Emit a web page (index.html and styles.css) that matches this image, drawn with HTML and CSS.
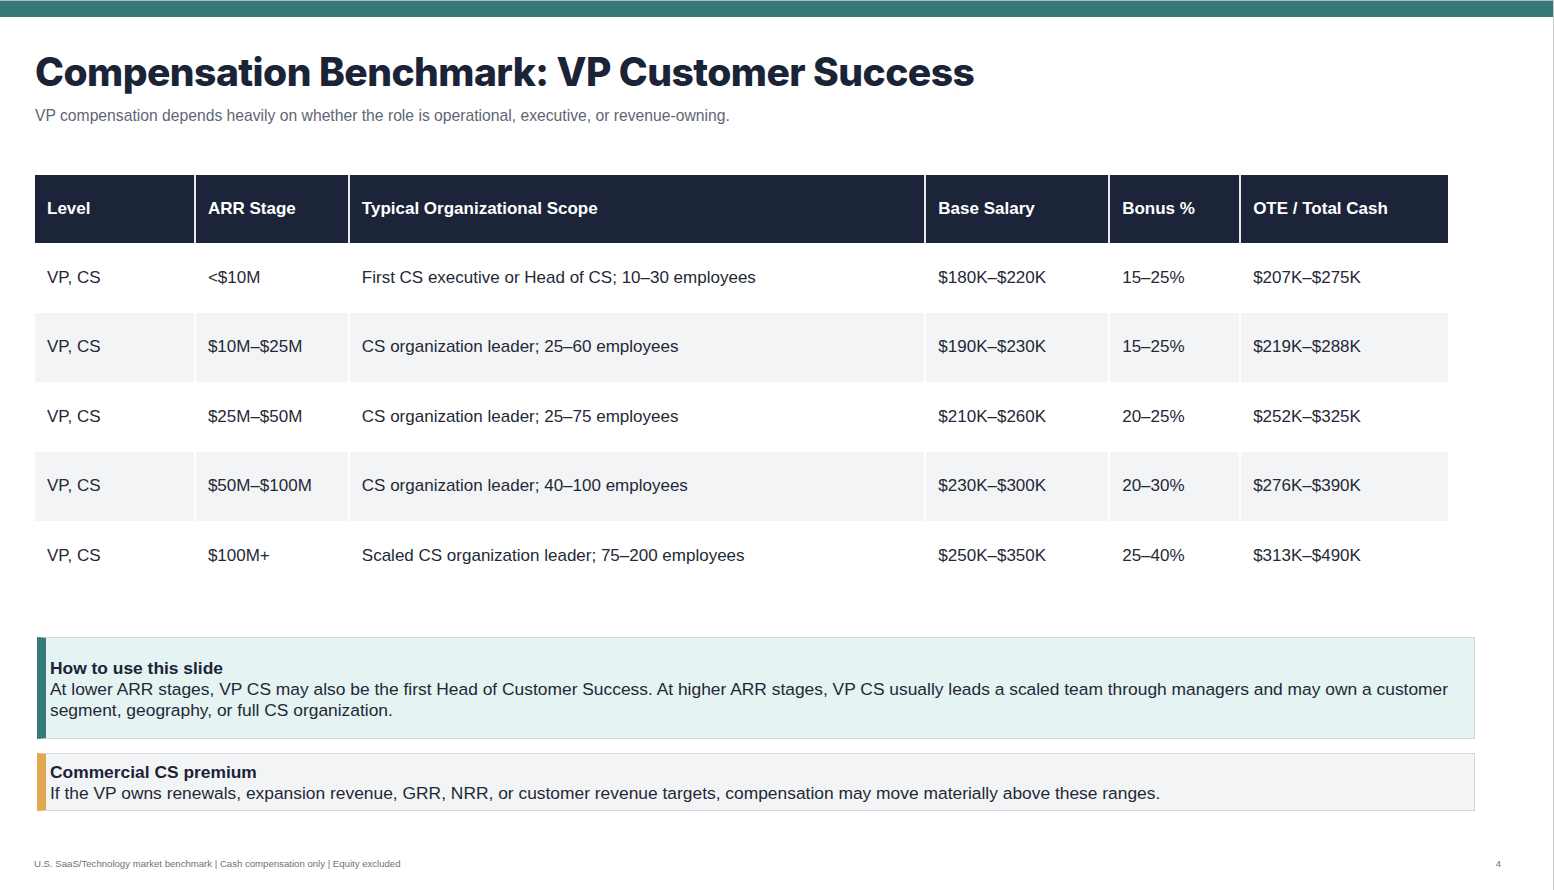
FILE: index.html
```html
<!DOCTYPE html>
<html>
<head>
<meta charset="utf-8">
<link rel="stylesheet" href="styles.css">
</head>
<body>
<div class="slide">
  <div class="topbar"></div>
  <div class="content">
    <h1 class="title">Compensation Benchmark: VP Customer Success</h1>
    <p class="subtitle">VP compensation depends heavily on whether the role is operational, executive, or revenue-owning.</p>
    <table class="bench">
      <thead>
        <tr>
          <th class="c1">Level</th>
          <th class="c2">ARR Stage</th>
          <th class="c3">Typical Organizational Scope</th>
          <th class="c4">Base Salary</th>
          <th class="c5">Bonus %</th>
          <th class="c6">OTE / Total Cash</th>
        </tr>
      </thead>
      <tbody>
        <tr><td>VP, CS</td><td>&lt;$10M</td><td>First CS executive or Head of CS; 10–30 employees</td><td>$180K–$220K</td><td>15–25%</td><td>$207K–$275K</td></tr>
        <tr><td>VP, CS</td><td>$10M–$25M</td><td>CS organization leader; 25–60 employees</td><td>$190K–$230K</td><td>15–25%</td><td>$219K–$288K</td></tr>
        <tr><td>VP, CS</td><td>$25M–$50M</td><td>CS organization leader; 25–75 employees</td><td>$210K–$260K</td><td>20–25%</td><td>$252K–$325K</td></tr>
        <tr><td>VP, CS</td><td>$50M–$100M</td><td>CS organization leader; 40–100 employees</td><td>$230K–$300K</td><td>20–30%</td><td>$276K–$390K</td></tr>
        <tr><td>VP, CS</td><td>$100M+</td><td>Scaled CS organization leader; 75–200 employees</td><td>$250K–$350K</td><td>25–40%</td><td>$313K–$490K</td></tr>
      </tbody>
    </table>
    <div class="callout teal">
      <div class="callout-title">How to use this slide</div>
      <div class="callout-text">At lower ARR stages, VP CS may also be the first Head of Customer Success. At higher ARR stages, VP CS usually leads a scaled team through managers and may own a customer segment, geography, or full CS organization.</div>
    </div>
    <div class="callout amber">
      <div class="callout-title">Commercial CS premium</div>
      <div class="callout-text">If the VP owns renewals, expansion revenue, GRR, NRR, or customer revenue targets, compensation may move materially above these ranges.</div>
    </div>
    <div class="footer">
      <span class="source">U.S. SaaS/Technology market benchmark | Cash compensation only | Equity excluded</span>
      <span class="page">4</span>
    </div>
  </div>
</div>
</body>
</html>
```
FILE: styles.css
```css
html, body {
  margin: 0;
  padding: 0;
  background: #ffffff;
}
.slide {
  width: 1553px;
  height: 889px;
  border-top: 1px solid #b8b8b8;
  border-right: 1px solid #c9c9c9;
  font-family: "Liberation Sans", Arial, sans-serif;
  color: #1f2937;
  overflow: hidden;
}
.topbar {
  height: 16px;
  background: #357a78;
}
.content {
  padding: 0 0 0 35px;
  display: flex;
  flex-direction: column;
}
.title {
  margin: 31px 0 0 0;
  font-family: "Inter", "Noto Sans", sans-serif;
  font-weight: 800;
  font-size: 39px;
  line-height: 48px;
  letter-spacing: -0.55px;
  color: #1b2437;
}
.subtitle {
  margin: 11px 0 0 0;
  font-size: 15.7px;
  line-height: 18px;
  color: #5f6673;
}
.bench {
  margin-top: 50px;
  width: 1413px;
  border-collapse: collapse;
  font-size: 17px;
}
.bench th {
  background: #1b2438;
  color: #ffffff;
  font-weight: bold;
  text-align: left;
  height: 68px;
  padding: 0 12px;
  border-left: 2px solid #e5e7eb;
}
.bench th:first-child, .bench td:first-child {
  border-left: none;
}
.bench td {
  height: 69.5px;
  padding: 0 12px;
  color: #1f2937;
  border-left: 2px solid #ffffff;
}
.bench tbody tr:nth-child(even) td {
  background: #f3f4f6;
}
.c1 { width: 135px; }
.c2 { width: 128px; }
.c3 { width: 551px; }
.c4 { width: 158px; }
.c5 { width: 105px; }
.c6 { width: 183px; }
.callout {
  margin-left: 2px;
  width: 1424px;
  border: 1px solid #d4d9de;
  border-left: 9px solid #357a78;
  padding: 0 0 0 4px;
  font-size: 17.4px;
  line-height: 21px;
  color: #1f2937;
}
.callout.teal {
  margin-top: 46px;
  background: #e5f3f2;
  padding-top: 20px;
  padding-bottom: 17px;
}
.callout.amber {
  margin-top: 14px;
  background: #f3f4f6;
  border-left-color: #e1a94f;
  padding-top: 8px;
  padding-bottom: 6px;
}
.callout-title {
  font-weight: bold;
  color: #1b2437;
}
.footer {
  margin-top: 47px;
  width: 1466px;
  display: flex;
  justify-content: space-between;
  font-size: 9.6px;
  color: #6b7280;
}
.footer .source {
  margin-left: -1px;
}
```
